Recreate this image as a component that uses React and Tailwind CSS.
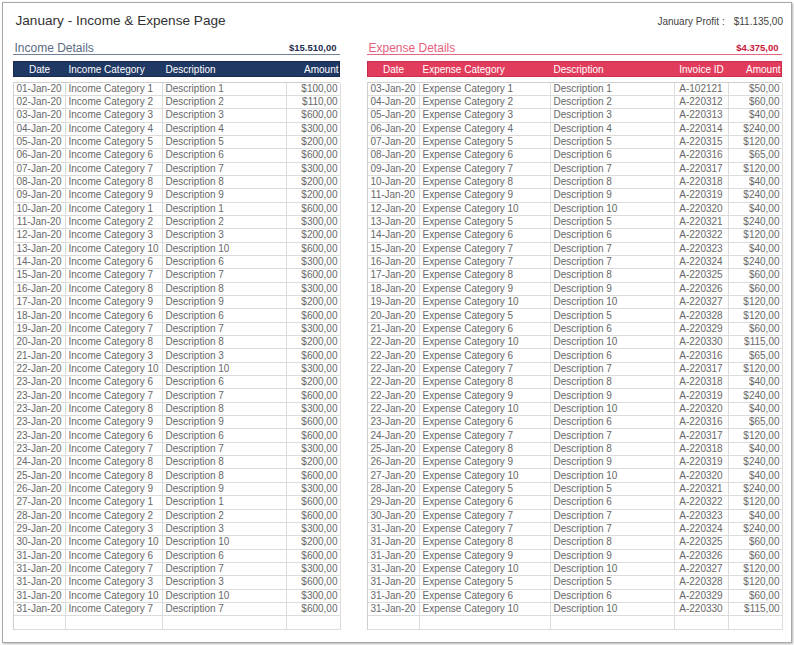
import React from 'react';

const income = [
  [1, 1, 100], [2, 2, 110], [3, 3, 600], [4, 4, 300], [5, 5, 200], [6, 6, 600], [7, 7, 300],
  [8, 8, 200], [9, 9, 200], [10, 1, 600], [11, 2, 300], [12, 3, 200], [13, 10, 600], [14, 6, 300],
  [15, 7, 600], [16, 8, 300], [17, 9, 200], [18, 6, 600], [19, 7, 300], [20, 8, 200], [21, 3, 600],
  [22, 10, 300], [23, 6, 200], [23, 7, 600], [23, 8, 300], [23, 9, 600], [23, 6, 600], [23, 7, 300],
  [24, 8, 200], [25, 8, 600], [26, 9, 300], [27, 1, 600], [28, 2, 600], [29, 3, 300], [30, 10, 200],
  [31, 6, 600], [31, 7, 300], [31, 3, 600], [31, 10, 300], [31, 7, 600],
];

const expenses = [
  [3, 1, 'A-102121', 50], [4, 2, 'A-220312', 60], [5, 3, 'A-220313', 40], [6, 4, 'A-220314', 240],
  [7, 5, 'A-220315', 120], [8, 6, 'A-220316', 65], [9, 7, 'A-220317', 120], [10, 8, 'A-220318', 40],
  [11, 9, 'A-220319', 240], [12, 10, 'A-220320', 40], [13, 5, 'A-220321', 240], [14, 6, 'A-220322', 120],
  [15, 7, 'A-220323', 40], [16, 7, 'A-220324', 240], [17, 8, 'A-220325', 60], [18, 9, 'A-220326', 60],
  [19, 10, 'A-220327', 120], [20, 5, 'A-220328', 120], [21, 6, 'A-220329', 60], [22, 10, 'A-220330', 115],
  [22, 6, 'A-220316', 65], [22, 7, 'A-220317', 120], [22, 8, 'A-220318', 40], [22, 9, 'A-220319', 240],
  [22, 10, 'A-220320', 40], [23, 6, 'A-220316', 65], [24, 7, 'A-220317', 120], [25, 8, 'A-220318', 40],
  [26, 9, 'A-220319', 240], [27, 10, 'A-220320', 40], [28, 5, 'A-220321', 240], [29, 6, 'A-220322', 120],
  [30, 7, 'A-220323', 40], [31, 7, 'A-220324', 240], [31, 8, 'A-220325', 60], [31, 9, 'A-220326', 60],
  [31, 10, 'A-220327', 120], [31, 5, 'A-220328', 120], [31, 6, 'A-220329', 60], [31, 10, 'A-220330', 115],
];

const day = (d) => `${String(d).padStart(2, '0')}-Jan-20`;
const money = (n) => `$${n},00`;

// alignment per column kind
const align = {
  c: 'justify-center',
  l: 'justify-start pl-[3px]',
  r: 'justify-end pr-[2px]',
};

const Row = ({ cols, cells }) => (
  <div className={`grid ${cols} h-[13.35px]`}>
    {cells.map((c, i) => (
      <div
        key={i}
        className={`flex items-center overflow-hidden whitespace-nowrap border-r border-b border-[#dcdcdc] leading-none ${align[c.a]}`}
      >
        {c.v}
      </div>
    ))}
  </div>
);

const Section = ({ title, total, titleColor, totalColor, lineColor, headBg, headBorder, cols, heads, rows, width }) => (
  <div className={`flex flex-col ${width}`}>
    <div className={`flex items-center justify-between h-[13px] mt-[13px] border-b-[1.5px] ${lineColor}`}>
      <span className={`text-[12px] pl-[2px] ${titleColor}`}>{title}</span>
      <span className={`text-[9.5px] font-bold pr-[3px] ${totalColor}`}>{total}</span>
    </div>

    {/* header bar */}
    <div className={`grid ${cols} h-[16px] mt-[6px] border ${headBg} ${headBorder} text-white text-[10px]`}>
      {heads.map((h, i) => (
        <div key={i} className={`flex items-center whitespace-nowrap ${align[h.a]}`}>{h.v}</div>
      ))}
    </div>

    {/* body */}
    <div className="mt-[4.5px] border-l border-t border-[#cfcfcf] text-[10px] text-[#686868]">
      {rows.map((r, i) => (
        <Row key={i} cols={cols} cells={r} />
      ))}
    </div>
  </div>
);

export default function App() {
  const incomeRows = income.map(([d, c, a]) => [
    { v: day(d), a: 'c' },
    { v: `Income Category ${c}`, a: 'l' },
    { v: `Description ${c}`, a: 'l' },
    { v: money(a), a: 'r' },
  ]);
  incomeRows.push([{ v: '', a: 'c' }, { v: '', a: 'l' }, { v: '', a: 'l' }, { v: '', a: 'r' }]);

  const expenseRows = expenses.map(([d, c, inv, a]) => [
    { v: day(d), a: 'c' },
    { v: `Expense Category ${c}`, a: 'l' },
    { v: `Description ${c}`, a: 'l' },
    { v: inv, a: 'c' },
    { v: money(a), a: 'r' },
  ]);
  expenseRows.push([{ v: '', a: 'c' }, { v: '', a: 'l' }, { v: '', a: 'l' }, { v: '', a: 'c' }, { v: '', a: 'r' }]);

  return (
    <div className="w-[794px] h-[645px] bg-white p-[2px] font-['Liberation_Sans',Arial,sans-serif]">
      <div className="w-full h-full flex flex-col border-[1.5px] border-[#a8a8a8] shadow-[1px_1px_2px_rgba(0,0,0,0.3)]">
        <div className="flex items-center justify-between h-[16px] mt-[10px] pl-[12.5px] pr-[8px]">
          <span className="text-[13.6px] text-[#333]">January - Income &amp; Expense Page</span>
          <span className="text-[10px] text-[#444] flex gap-[9px]">
            <span>January Profit :</span>
            <span>$11.135,00</span>
          </span>
        </div>

        <div className="flex gap-[27px] pl-[9.5px]">
          <Section
            width="w-[327px]"
            title="Income Details"
            total="$15.510,00"
            titleColor="text-[#5b6b84]"
            totalColor="text-[#1f2d4e]"
            lineColor="border-[#717f97]"
            headBg="bg-[#1f3864]"
            headBorder="border-[#172a4c]"
            cols="grid-cols-[52px_97px_124px_54px]"
            heads={[
              { v: 'Date', a: 'c' },
              { v: 'Income Category', a: 'l' },
              { v: 'Description', a: 'l' },
              { v: 'Amount', a: 'r' },
            ]}
            rows={incomeRows}
          />
          <Section
            width="w-[415px]"
            title="Expense Details"
            total="$4.375,00"
            titleColor="text-[#e6607c]"
            totalColor="text-[#c8183a]"
            lineColor="border-[#e2687f]"
            headBg="bg-[#e23c5c]"
            headBorder="border-[#c92f4d]"
            cols="grid-cols-[52px_131px_124px_54px_54px]"
            heads={[
              { v: 'Date', a: 'c' },
              { v: 'Expense Category', a: 'l' },
              { v: 'Description', a: 'l' },
              { v: 'Invoice ID', a: 'c' },
              { v: 'Amount', a: 'r' },
            ]}
            rows={expenseRows}
          />
        </div>
      </div>
    </div>
  );
}
